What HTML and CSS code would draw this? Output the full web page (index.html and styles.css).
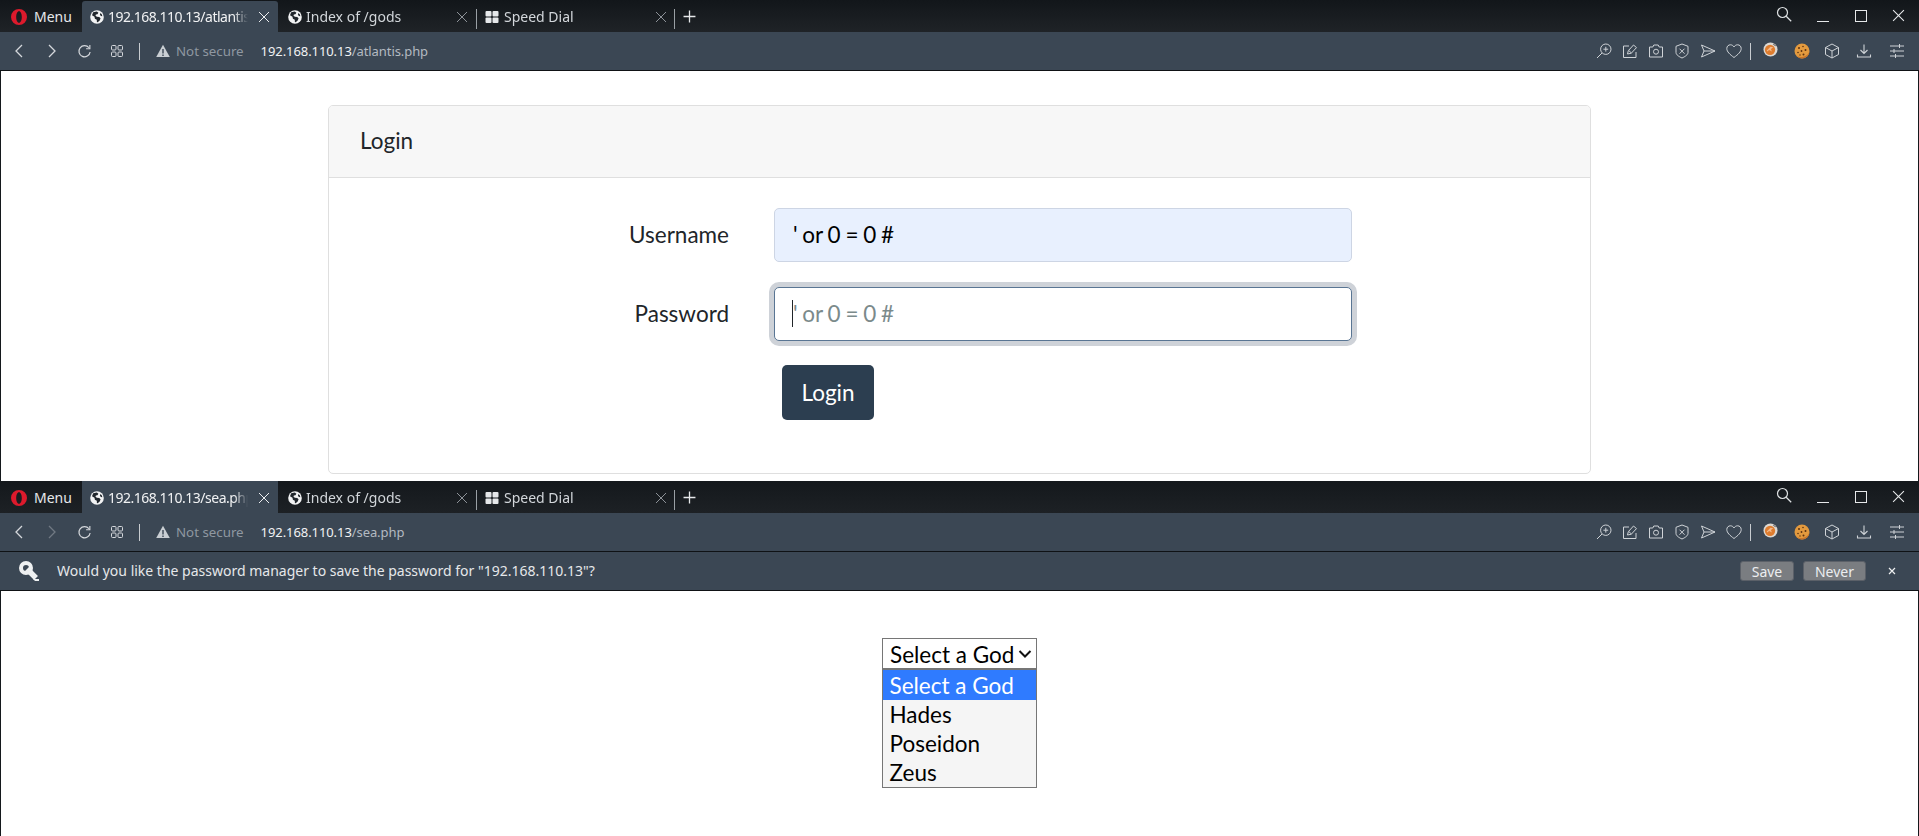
FILE: index.html
```html
<!DOCTYPE html>
<html lang="en">
<head>
<meta charset="utf-8">
<title>Opera windows</title>
<link rel="stylesheet" href="styles.css">
</head>
<body>
<svg class="defs" width="0" height="0" aria-hidden="true">
  <defs>
    <symbol id="opera" viewBox="0 0 16 16"><path fill="#dc1a2c" fill-rule="evenodd" d="M8 0a8 8 0 1 0 0 16A8 8 0 0 0 8 0Zm0 2.200c1.700 0 2.800 2.600 2.800 5.800S9.700 13.800 8 13.800 5.200 11.200 5.200 8 6.300 2.200 8 2.200Z"/></symbol>
    <symbol id="globe" viewBox="0 0 14 14"><circle cx="7" cy="7" r="6.800" fill="#f2f3f4"/><path fill="#20262c" d="M3.200 2.300 6.800 1.500l1.600 1.300-1 1.500-1.500.2-.4 1.300 1.400.9 2.300.2 1.400 1.300-.9 2.200-2 1.900-.8-.4-.1-2.100-1.900-1.100-.4-1.900L2 5.200Z"/><path fill="#20262c" d="m10.400 3 1.500 1.600.4 1.700-1.400-.3-1-1.300Z"/></symbol>
    <symbol id="grid" viewBox="0 0 14 14"><g fill="#e6e8ea"><rect x="0.500" y="1" width="6" height="5.500" rx="1"/><rect x="7.500" y="1" width="6" height="5.500" rx="1"/><rect x="0.500" y="7.500" width="6" height="5.500" rx="1"/><rect x="7.500" y="7.500" width="6" height="5.500" rx="1"/></g></symbol>
    <symbol id="close" viewBox="0 0 12 12"><path d="m1 1 10 10M11 1 1 11" fill="none" stroke="currentColor" stroke-width="1"/></symbol>
    <symbol id="close-small" viewBox="0 0 8 8"><path d="m1 1 6 6M7 1 1 7" fill="none" stroke="currentColor" stroke-width="1.200"/></symbol>
    <symbol id="plus" viewBox="0 0 12 12"><path d="M6 .5v11M.5 6h11" fill="none" stroke="currentColor" stroke-width="1.200"/></symbol>
    <symbol id="search" viewBox="0 0 16 16"><circle cx="6.500" cy="6.500" r="5" fill="none" stroke="currentColor" stroke-width="1.200"/><path d="m10.200 10.200 5 5" stroke="currentColor" stroke-width="1.300"/></symbol>
    <symbol id="back" viewBox="0 0 10 16"><path d="M8 2 2 8l6 6" fill="none" stroke="currentColor" stroke-width="1.300"/></symbol>
    <symbol id="forward" viewBox="0 0 10 16"><path d="m2 2 6 6-6 6" fill="none" stroke="currentColor" stroke-width="1.300"/></symbol>
    <symbol id="reload" viewBox="0 0 16 16"><path d="M12.800 4A6 6 0 1 0 14 8.500" fill="none" stroke="currentColor" stroke-width="1.300"/><path d="M13.700 1v4h-4" fill="none" stroke="currentColor" stroke-width="1.200"/></symbol>
    <symbol id="tiles" viewBox="0 0 14 14"><g fill="none" stroke="currentColor" stroke-width="1"><rect x="1.500" y="1.500" width="4.500" height="4.500" rx="1"/><rect x="8" y="1.500" width="4.500" height="4.500" rx="1"/><rect x="1.500" y="8" width="4.500" height="4.500" rx="1"/><rect x="8" y="8" width="4.500" height="4.500" rx="1"/></g></symbol>
    <symbol id="warn" viewBox="0 0 14 14"><path fill="#c9ced3" d="M7 .8 13.800 13H.2Z"/><path stroke="#3b4754" stroke-width="1.400" d="M7 5v4.500M7 10.500V12"/></symbol>
    <symbol id="zoomin" viewBox="0 0 16 16"><g fill="none" stroke="currentColor" stroke-width="1"><circle cx="9.800" cy="6.200" r="5.200"/><path d="M6 10 1 15M9.800 3.800v4.800M7.400 6.200h4.800"/></g></symbol>
    <symbol id="edit" viewBox="0 0 16 16"><g fill="none" stroke="currentColor" stroke-width="1"><path d="M7 3H1.500v11.500H14V9"/><path d="m5.500 11 .8-3.300 5.200-5.700 3 2.600-5.200 5.600ZM6.800 7.500l2.600 2.500"/></g></symbol>
    <symbol id="camera" viewBox="0 0 16 16"><g fill="none" stroke="currentColor" stroke-width="1"><path d="M1.500 4h3.300l1-2h4.400l1 2h3.300v10h-13Z"/><circle cx="8" cy="8.700" r="2.500"/></g></symbol>
    <symbol id="shield" viewBox="0 0 16 16"><g fill="none" stroke="currentColor" stroke-width="1"><path d="M8 1 14 3.300v6.200c0 2.200-3 4.200-6 5.500-3-1.300-6-3.300-6-5.500V3.300Z"/><path d="m5.500 5.700 5 5M10.500 5.700l-5 5"/></g></symbol>
    <symbol id="send" viewBox="0 0 16 16"><path d="M1.500 2 15 8 1.500 14 4 8Zm2.500 6h11" fill="none" stroke="currentColor" stroke-width="1"/></symbol>
    <symbol id="heart" viewBox="0 0 16 16"><path d="M8 14.500C4 11.500.8 8.800.8 5.500.8 3.200 2.500 1.800 4.400 1.800 6 1.800 7.300 2.700 8 4c.7-1.300 2-2.200 3.600-2.200 1.900 0 3.600 1.400 3.600 3.700 0 3.300-3.200 6-7.200 9Z" fill="none" stroke="currentColor" stroke-width="1"/></symbol>
    <symbol id="ball" viewBox="0 0 16 16"><circle cx="8" cy="8" r="7.500" fill="#dcd8d2"/><circle cx="7.500" cy="8.300" r="5.500" fill="#de7c2e"/><path fill="#f3b98a" d="m4 9 4-4 3 .5-2.500 2 1 2.500-3-1.500-2 1.500Z"/><path fill="#6e6a66" d="M11 1.500 14 4l-1 .5L10.500 2.500Z"/></symbol>
    <symbol id="cookie" viewBox="0 0 16 16"><circle cx="8" cy="8" r="7.500" fill="#e39a3e"/><path fill="#c8752a" d="M8 15.500A7.500 7.500 0 0 0 15.500 8c-1 3.500-4 6-8.500 6-2 0-3.300-.6-4.500-1.500A7.500 7.500 0 0 0 8 15.500Z"/><g fill="#5b3212"><circle cx="5" cy="5" r="1"/><circle cx="9" cy="3.500" r=".8"/><circle cx="11.500" cy="7" r="1"/><circle cx="7.500" cy="8" r=".9"/><circle cx="4" cy="9.500" r=".8"/><circle cx="9.500" cy="11.500" r="1"/><circle cx="6" cy="12" r=".7"/></g></symbol>
    <symbol id="cube" viewBox="0 0 16 16"><path d="M8 1 14.500 4.500v7L8 15l-6.500-3.500v-7ZM1.500 4.500 8 8l6.500-3.500M8 8v7" fill="none" stroke="currentColor" stroke-width="1"/></symbol>
    <symbol id="download" viewBox="0 0 16 16"><path d="M8 1.500V10M4.500 7 8 10.500 11.500 7M1.500 11.500v2.500h13v-2.500" fill="none" stroke="currentColor" stroke-width="1.100"/></symbol>
    <symbol id="sliders" viewBox="0 0 16 16"><path d="M1 3h14M1 8h14M1 13h14M10.500 1v4M5 6v4M6.500 11v4" fill="none" stroke="currentColor" stroke-width="1"/></symbol>
    <symbol id="key" viewBox="0 0 20 20"><path d="m8 8 9 9" fill="none" stroke="#eef0f1" stroke-width="5.500"/><path fill="#eef0f1" d="M14 18h6v2h-4Z"/><circle cx="7" cy="7" r="5" fill="none" stroke="#eef0f1" stroke-width="4"/></symbol>
    <symbol id="chev" viewBox="0 0 14 10"><path d="m1.500 2 5.500 5.500L12.500 2" fill="none" stroke="#111" stroke-width="2"/></symbol>
  </defs>
</svg>

<section class="window window-one">
  <header class="tabbar">
    <div class="menu"><svg class="i16"><use href="#opera"/></svg><span>Menu</span></div>
    <div class="tab active"><svg class="i14"><use href="#globe"/></svg><span class="tab-title">192.168.110.13/atlantis.php</span><svg class="tab-x"><use href="#close"/></svg></div>
    <div class="tab mid"><svg class="i14"><use href="#globe"/></svg><span class="tab-title">Index of /gods</span><svg class="tab-x dim"><use href="#close"/></svg></div>
    <div class="tab sep"><svg class="i14"><use href="#grid"/></svg><span class="tab-title">Speed Dial</span><svg class="tab-x dim"><use href="#close"/></svg></div>
    <svg class="newtab"><use href="#plus"/></svg>
    <div class="winctl">
      <svg class="wsearch"><use href="#search"/></svg>
      <span class="wmin"></span>
      <span class="wmax"></span>
      <svg class="wclose"><use href="#close"/></svg>
    </div>
  </header>
  <nav class="toolbar">
    <svg class="nav"><use href="#back"/></svg>
    <svg class="nav fwd"><use href="#forward"/></svg>
    <svg class="tool-reload"><use href="#reload"/></svg>
    <svg class="tool-tiles"><use href="#tiles"/></svg>
    <span class="vsep"></span>
    <svg class="warn"><use href="#warn"/></svg>
    <span class="notsecure">Not secure</span>
    <span class="url"><b>192.168.110.13</b>/atlantis.php</span>
    <div class="tools">
      <svg><use href="#zoomin"/></svg><svg><use href="#edit"/></svg><svg><use href="#camera"/></svg><svg><use href="#shield"/></svg><svg><use href="#send"/></svg><svg><use href="#heart"/></svg>
      <span class="vsep tools-sep"></span>
      <svg class="t-ball"><use href="#ball"/></svg><svg class="t-cookie"><use href="#cookie"/></svg><svg class="t-cube"><use href="#cube"/></svg><svg class="t-dl"><use href="#download"/></svg><svg class="t-sl"><use href="#sliders"/></svg>
    </div>
  </nav>
  <main class="page page-login">
    <div class="card">
      <div class="card-header">Login</div>
      <form class="card-body">
        <div class="row">
          <label class="label" for="user">Username</label>
          <input class="input autofilled" id="user" type="text" value="' or 0 = 0 #">
        </div>
        <div class="row">
          <label class="label" for="pass">Password</label>
          <div class="focus-wrap">
            <input class="input focused" id="pass" type="text" placeholder="' or 0 = 0 #">
            <span class="caret"></span>
          </div>
        </div>
        <button class="btn" type="button">Login</button>
      </form>
    </div>
  </main>
</section>

<section class="window window-two">
  <header class="tabbar">
    <div class="menu"><svg class="i16"><use href="#opera"/></svg><span>Menu</span></div>
    <div class="tab active"><svg class="i14"><use href="#globe"/></svg><span class="tab-title">192.168.110.13/sea.php</span><svg class="tab-x"><use href="#close"/></svg></div>
    <div class="tab mid"><svg class="i14"><use href="#globe"/></svg><span class="tab-title">Index of /gods</span><svg class="tab-x dim"><use href="#close"/></svg></div>
    <div class="tab sep"><svg class="i14"><use href="#grid"/></svg><span class="tab-title">Speed Dial</span><svg class="tab-x dim"><use href="#close"/></svg></div>
    <svg class="newtab"><use href="#plus"/></svg>
    <div class="winctl">
      <svg class="wsearch"><use href="#search"/></svg>
      <span class="wmin"></span>
      <span class="wmax"></span>
      <svg class="wclose"><use href="#close"/></svg>
    </div>
  </header>
  <nav class="toolbar">
    <svg class="nav"><use href="#back"/></svg>
    <svg class="nav fwd off"><use href="#forward"/></svg>
    <svg class="tool-reload"><use href="#reload"/></svg>
    <svg class="tool-tiles"><use href="#tiles"/></svg>
    <span class="vsep"></span>
    <svg class="warn"><use href="#warn"/></svg>
    <span class="notsecure">Not secure</span>
    <span class="url"><b>192.168.110.13</b>/sea.php</span>
    <div class="tools">
      <svg><use href="#zoomin"/></svg><svg><use href="#edit"/></svg><svg><use href="#camera"/></svg><svg><use href="#shield"/></svg><svg><use href="#send"/></svg><svg><use href="#heart"/></svg>
      <span class="vsep tools-sep"></span>
      <svg class="t-ball"><use href="#ball"/></svg><svg class="t-cookie"><use href="#cookie"/></svg><svg class="t-cube"><use href="#cube"/></svg><svg class="t-dl"><use href="#download"/></svg><svg class="t-sl"><use href="#sliders"/></svg>
    </div>
  </nav>
  <div class="infobar">
    <svg class="key"><use href="#key"/></svg>
    <span class="info-text">Would you like the password manager to save the password for "192.168.110.13"?</span>
    <button class="info-btn save" type="button">Save</button>
    <button class="info-btn never" type="button">Never</button>
    <svg class="info-x"><use href="#close-small"/></svg>
  </div>
  <main class="page page-sea">
    <div class="select-wrap">
      <div class="select"><span>Select a God</span><svg class="chev"><use href="#chev"/></svg></div>
      <ul class="listbox">
        <li class="selected">Select a God</li>
        <li>Hades</li>
        <li>Poseidon</li>
        <li>Zeus</li>
      </ul>
    </div>
  </main>
</section>
</body>
</html>
```
FILE: styles.css
```css
* { box-sizing: border-box; }
html, body { margin: 0; padding: 0; height: 100%; overflow: hidden; }
body { background: #fff; font-family: "Noto Sans", sans-serif; width: 1919px; height: 836px; }
.defs { position: absolute; }
svg { display: block; flex: none; }

.window { display: flex; flex-direction: column; overflow: hidden; }
.window-one { height: 481px; }
.window-two { height: 355px; }

/* tab strip */
.tabbar { height: 32px; display: flex; align-items: stretch; background: linear-gradient(#12161a, #1f2327); color: #e6e8ea; font-size: 14px; }
.window-two .tabbar { background: linear-gradient(#14181c, #1d2125); }
.menu { width: 82px; padding-left: 11px; display: flex; align-items: center; gap: 7px; padding-top: 1px; }
.i16 { width: 16px; height: 16px; }
.i14 { width: 14px; height: 14px; }
.tab { width: 196px; padding: 1px 8px 0 8px; display: flex; align-items: center; gap: 4px; color: #d2d6da; position: relative; }
.tab.active { background: #3b4754; border-radius: 3px 3px 0 0; margin-top: 1px; color: #f1f2f3; padding-top: 0; letter-spacing: -.5px; }
.window-two .tab.active { margin-top: 0; padding-top: 1px; border-radius: 0; }
.tab.mid { width: 199px; padding-left: 10px; padding-right: 8px; }
.tab.sep { width: 198px; padding-left: 8px; padding-right: 8px; }
.tab-title { flex: 1; min-width: 0; overflow: hidden; white-space: nowrap; -webkit-mask-image: linear-gradient(to left, transparent 0, #000 14px); mask-image: linear-gradient(to left, transparent 0, #000 14px); }
.tab-x { width: 12px; height: 12px; color: #eceef0; margin-left: 6px; }
.tab-x.dim { color: #8d9298; }
.tab.mid .tab-x.dim { margin-right: 1px; }
.tab.sep .tab-x.dim { margin-right: 0; }
.tab.sep .tab-title { margin-left: 1px; }
.tab.mid::after, .tab.sep::after { content: ""; position: absolute; right: 0; top: 9px; height: 20px; width: 1px; background: #9aa0a5; }
.newtab { width: 13px; height: 13px; color: #e6e8ea; margin: 10px 0 0 8px; }
.winctl { margin-left: auto; display: flex; align-items: flex-start; color: #dfe2e4; padding-right: 14px; }
.wsearch { width: 16px; height: 16px; margin: 6px 0 0 0; }
.wmin { width: 12px; height: 1px; background: #e6e8ea; margin: 21px 0 0 25px; }
.wmax { width: 12px; height: 12px; border: 1px solid #e6e8ea; margin: 10px 0 0 26px; }
.wclose { width: 13px; height: 13px; margin: 9px 0 0 25px; color: #e6e8ea; }

/* address bar */
.toolbar { height: 39px; display: flex; align-items: center; background: #3b4754; border-bottom: 1px solid #0f1215; color: #d5d8dc; padding: 0 0 0 14px; font-size: 13px; }
.nav { width: 10px; height: 16px; }
.fwd { margin-left: 23px; }
.fwd.off { opacity: .35; }
.tool-reload { width: 15px; height: 15px; margin-left: 20px; }
.tool-tiles { width: 14px; height: 14px; margin-left: 18px; }
.vsep { width: 1px; height: 17px; background: #c8ccd0; margin-left: 15px; }
.warn { width: 14px; height: 14px; margin-left: 16px; }
.notsecure { color: #8f98a1; margin-left: 6px; font-size: 13.300px; }
.url { color: #b3bac1; margin-left: 17px; letter-spacing: -.08px; }
.url b { font-weight: 400; color: #f1f2f3; }
.tools { margin-left: auto; display: flex; align-items: center; gap: 10px; color: #cfd3d7; margin-right: 14px; }
.tools svg { width: 16px; height: 16px; }
.tools .tools-sep { margin-left: -2px; }
.tools .t-ball { width: 15px; height: 15px; margin-left: 1.500px; margin-top: -3px; }
.tools .t-cookie { margin-left: 6.500px; }
.tools .t-cube { margin-left: 4px; }
.tools .t-dl { margin-left: 6px; }
.tools .t-sl { margin-left: 7px; }

/* login page */
.page { flex: 1; background: #fff; border-left: 1px solid #14181c; border-right: 1px solid #14181c; font-family: "Lato", sans-serif; }
.page-login { padding: 34px 326px 0 327px; overflow: hidden; }
.card { width: 1263px; height: 369px; border: 1px solid #dfdfdf; border-radius: 5px; background: #fff; color: #212529; }
.card-header { height: 72px; background: #f7f7f7; border-bottom: 1px solid #dfdfdf; border-radius: 4px 4px 0 0; padding: 0 31px; font-size: 22.500px; line-height: 69px; }
.card-body { padding: 30px 0 0 0; }
.row { display: flex; align-items: center; margin-bottom: 25px; height: 54px; }
.label { width: 401px; text-align: right; font-size: 22.500px; padding: 0 1px 2px 0; }
.input { display: block; width: 578px; height: 54px; margin-left: 44px; border: 1px solid #ced4da; border-radius: 5px; padding: 0 18px 2px; font: 22.500px "Lato", sans-serif; word-spacing: -1px; color: #212529; outline: none; }
.autofilled { background: #e8f0fe; color: #000; border-color: #cdd5e4; }
.focus-wrap { position: relative; margin-left: 44px; }
.focused { margin: 0; border-color: #597593; box-shadow: 0 0 0 5px #ced2d8; }
.focused::placeholder { color: #7b8a8b; opacity: 1; }
.caret { position: absolute; left: 18px; top: 13px; height: 27px; width: 1px; background: #212529; }
.btn { display: block; margin-left: 453px; margin-top: -1px; width: 92px; height: 55px; background: #2c3e50; color: #fff; border: 0; border-radius: 5px; font: 22.500px "Lato", sans-serif; padding: 0; }

/* password bar */
.infobar { height: 39px; display: flex; align-items: center; background: #3b4754; border-bottom: 1px solid #0f1215; color: #e6e8ea; font-size: 14px; padding: 0 0 1px 19px; }
.key { width: 20px; height: 20px; }
.info-text { margin-left: 18px; }
.info-btn { height: 20px; background: #7a7d81; border: 1px solid #5b6068; border-radius: 3px; color: #eceef0; font: 14px "Noto Sans", sans-serif; padding: 0; }
.save { width: 54px; margin-left: auto; }
.never { width: 63px; margin-left: 9px; }
.info-x { width: 8px; height: 8px; margin: 0 23px 0 22px; color: #eef0f1; }

/* select page */
.page-sea { display: flex; justify-content: center; padding: 47px 0 0 0; }
.select-wrap { width: 155px; color: #000; font-size: 22.500px; }
.select { height: 31px; border: 1px solid #767676; background: #fff; display: flex; align-items: center; padding: 1px 0 0 7px; white-space: nowrap; }
.chev { width: 14px; height: 10px; margin-left: 4px; }
.listbox { list-style: none; margin: 0; padding: 0; border: 1px solid #767676; background: #f5f5f5; }
.listbox li { height: 29px; line-height: 29px; padding-left: 6.500px; white-space: nowrap; }
.listbox li.selected { height: 30px; line-height: 31px; background: #2f7bff; color: #fff; }
```
